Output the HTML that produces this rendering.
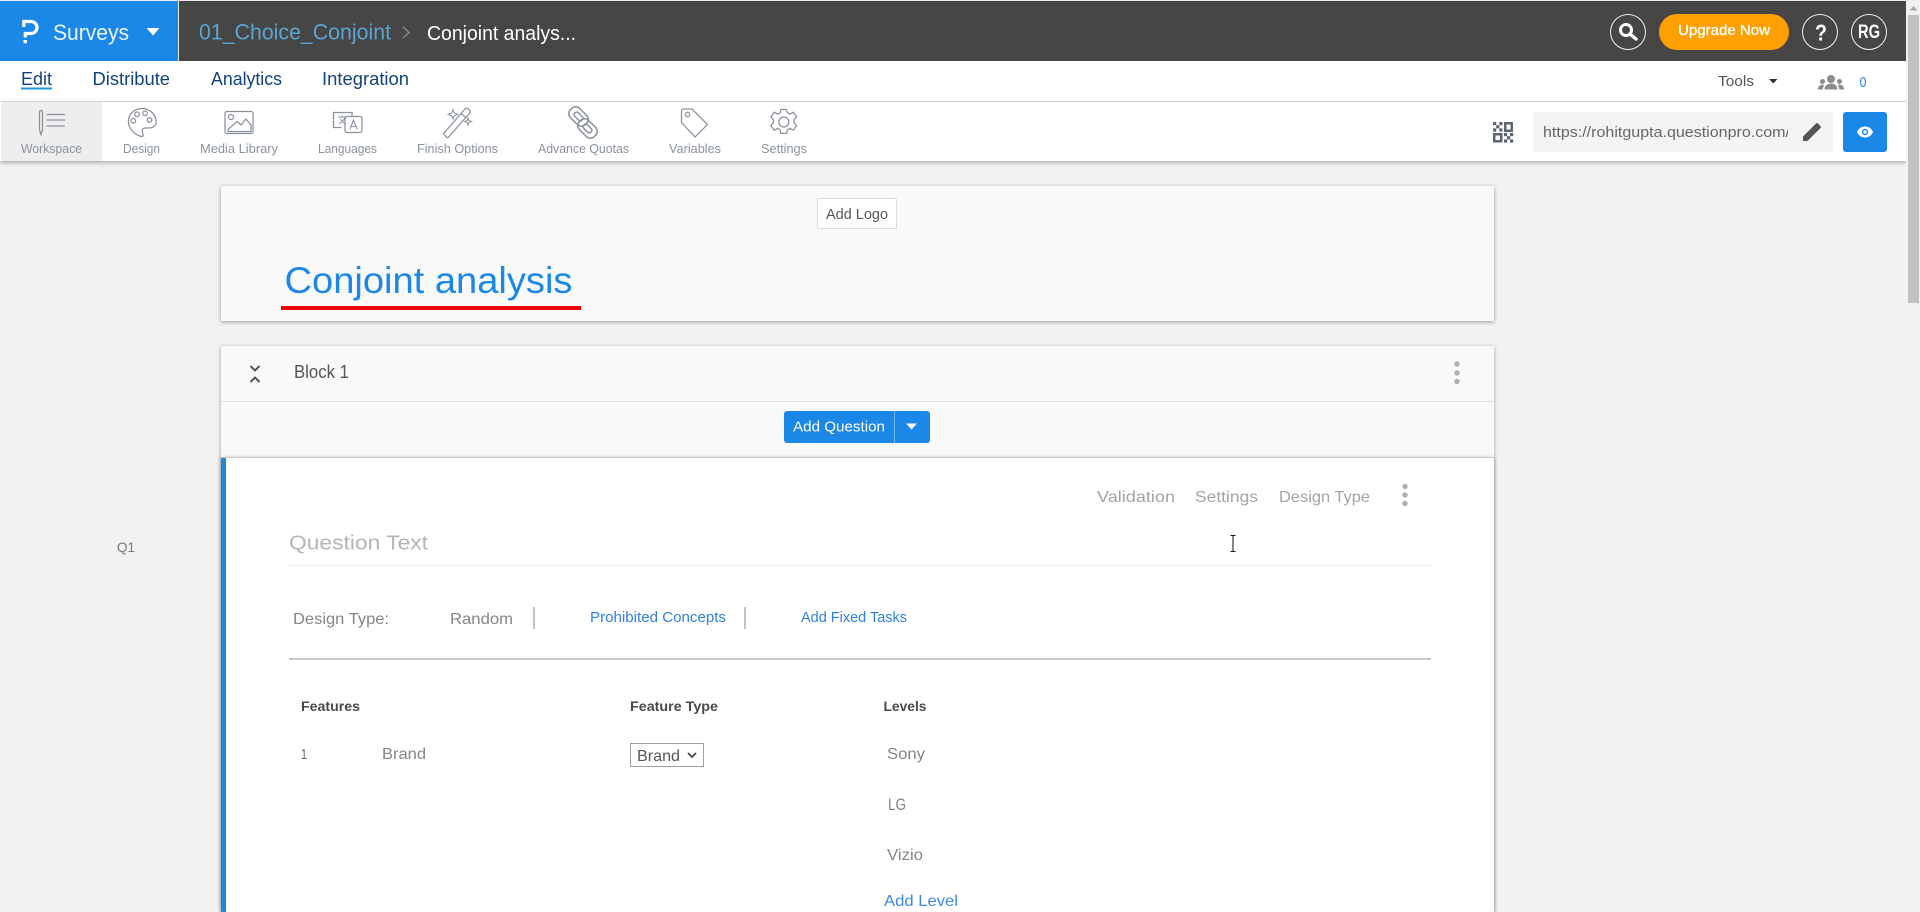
<!DOCTYPE html>
<html lang="en">
<head>
<meta charset="utf-8">
<title>Surveys - Conjoint analysis</title>
<style>
html,body{margin:0;padding:0;width:1920px;height:912px;overflow:hidden;background:#f2f2f2;font-family:"Liberation Sans",sans-serif}
#page{position:relative;width:1920px;height:912px;overflow:hidden;background:#f2f2f2}
.b{position:absolute;box-sizing:border-box}
svg{position:absolute;left:0;top:0;display:block}
text{font-family:"Liberation Sans",sans-serif}
.ic{fill:none;stroke:#8b919c;stroke-width:1.25}
.lab{font-size:13px;fill:#8b929d}
.nav{font-size:18px;fill:#14427f}
</style>
</head>
<body>
<div id="page">
<!-- top bar -->
<div class="b" style="left:0;top:0;width:1906px;height:61px;background:#464646"></div>
<div class="b" style="left:0;top:0;width:1920px;height:1px;background:#f0eaf0"></div>
<div class="b" style="left:0;top:1px;width:178px;height:60px;background:#1b87e6"></div>
<div class="b" style="left:178px;top:1px;width:1px;height:60px;background:#e8e8e8"></div>
<!-- nav -->
<div class="b" style="left:0;top:61px;width:1906px;height:41px;background:#fff;border-bottom:1px solid #dcdcdc"></div>
<!-- toolbar -->
<div class="b" style="left:0;top:102px;width:1906px;height:59px;background:#fff;box-shadow:0 2px 4px rgba(0,0,0,.28)"></div>
<div class="b" style="left:1px;top:102px;width:101px;height:59px;background:#eee"></div>
<div class="b" style="left:1533px;top:112px;width:300px;height:40px;background:#f4f4f4;border-radius:3px"></div>
<div class="b" style="left:1843px;top:112px;width:44px;height:40px;background:#1b87e6;border-radius:3px"></div>
<!-- scrollbar -->
<div class="b" style="left:1906px;top:1px;width:14px;height:911px;background:#f1f1f1"></div>
<div class="b" style="left:1908px;top:15px;width:11px;height:288px;background:#c1c1c1"></div>
<!-- header card -->
<div class="b" style="left:221px;top:186px;width:1273px;height:135px;background:#f9f9f9;box-shadow:0 1px 4px rgba(0,0,0,.38)"></div>
<div class="b" style="left:817px;top:198px;width:80px;height:31px;background:#fff;border:1px solid #dcdcdc;border-radius:2px"></div>
<div class="b" style="left:281px;top:306px;width:300px;height:4px;background:#e8000b"></div>
<!-- block card -->
<div class="b" style="left:221px;top:346px;width:1273px;height:566px;background:#f9f9f9;box-shadow:0 1px 4px rgba(0,0,0,.35)"></div>
<div class="b" style="left:221px;top:401px;width:1273px;height:1px;background:#dedede"></div>
<div class="b" style="left:784px;top:411px;width:146px;height:32px;background:#1b87e6;border-radius:3px"></div>
<div class="b" style="left:894px;top:411px;width:1px;height:32px;background:#6db4f0"></div>
<!-- question card -->
<div class="b" style="left:221px;top:457px;width:1273px;height:455px;background:#fff;border-top:1px solid #c9c9c9;box-shadow:0 1px 4px rgba(0,0,0,.3)"></div>
<div class="b" style="left:221px;top:458px;width:5px;height:454px;background:#1b87e6"></div>
<div class="b" style="left:289px;top:565px;width:1142px;height:1px;background:#ebebeb"></div>
<div class="b" style="left:289px;top:658px;width:1142px;height:2px;background:#c8c8c8"></div>
<div class="b" style="left:533px;top:607px;width:2px;height:22px;background:#c4c4c4"></div>
<div class="b" style="left:744px;top:607px;width:2px;height:22px;background:#c4c4c4"></div>
<div class="b" style="left:630px;top:743px;width:74px;height:24px;background:#fff;border:1px solid #a0a0a0"></div>

<svg width="1920" height="912" viewBox="0 0 1920 912" xmlns="http://www.w3.org/2000/svg">
<!-- logo -->
<path d="M23.800 27V21.500H31a6 6 0 0 1 0 12H25.300V37.500" fill="none" stroke="#fff" stroke-width="3.200"/>
<rect x="23.500" y="40" width="3.400" height="3.200" fill="#fff"/>
<text x="53" y="40" font-size="22" fill="#eaf4fd" textLength="76" lengthAdjust="spacingAndGlyphs">Surveys</text>
<path d="M146.500 28h13l-6.500 7.500z" fill="#fff"/>
<text x="199" y="39.500" font-size="22" fill="#5ba5d2" textLength="192" lengthAdjust="spacingAndGlyphs">01_Choice_Conjoint</text>
<path d="M403 27l6 5.500-6 5.500" fill="none" stroke="#8a8a8a" stroke-width="1.500"/>
<text x="427" y="40" font-size="20" fill="#fff" textLength="149" lengthAdjust="spacingAndGlyphs">Conjoint analys...</text>

<!-- top right -->
<circle cx="1628" cy="32" r="17.500" fill="none" stroke="#f2f2f2" stroke-width="1"/>
<circle cx="1626" cy="30" r="5.500" fill="none" stroke="#fff" stroke-width="3"/>
<path d="M1630 34l6 5" stroke="#fff" stroke-width="3.400" stroke-linecap="round"/>
<rect x="1659" y="14" width="130" height="36" rx="18" fill="#ffa000"/>
<text x="1678" y="35" font-size="15" fill="#fff" stroke="#fff" stroke-width=".35" textLength="92" lengthAdjust="spacingAndGlyphs">Upgrade Now</text>
<circle cx="1820" cy="32" r="17.500" fill="none" stroke="#f2f2f2" stroke-width="1"/>
<text x="1815" y="40.500" font-size="23" font-weight="bold" fill="#fff" textLength="12" lengthAdjust="spacingAndGlyphs">?</text>
<circle cx="1869" cy="32" r="17.500" fill="none" stroke="#f2f2f2" stroke-width="1"/>
<text x="1858" y="38" font-size="19" font-weight="bold" fill="#fff" textLength="22" lengthAdjust="spacingAndGlyphs">RG</text>

<!-- nav -->
<text class="nav" x="21" y="85" textLength="31" lengthAdjust="spacingAndGlyphs">Edit</text>
<rect x="21" y="87.500" width="31" height="2" fill="#1b9ad6"/>
<text class="nav" x="92.500" y="85" textLength="77.500" lengthAdjust="spacingAndGlyphs">Distribute</text>
<text class="nav" x="211" y="85" textLength="71" lengthAdjust="spacingAndGlyphs">Analytics</text>
<text class="nav" x="322" y="85" textLength="87" lengthAdjust="spacingAndGlyphs">Integration</text>
<text x="1718" y="86" font-size="15" fill="#555" textLength="36" lengthAdjust="spacingAndGlyphs">Tools</text>
<path d="M1769 79h8.500l-4.250 4.500z" fill="#333"/>
<g fill="#8c8c8c">
<circle cx="1831" cy="79" r="4"/><circle cx="1822.500" cy="81.500" r="2.500"/><circle cx="1839.500" cy="81.500" r="2.500"/>
<path d="M1824.500 89.500c0-8 13-8 13 0z"/><path d="M1818 89.500c0-4.500 3.500-5.500 6-4.500l-1.500 4.500z"/><path d="M1844 89.500c0-4.500-3.500-5.500-6-4.500l1.500 4.500z"/>
</g>
<text x="1859.500" y="87" font-size="15" fill="#2a7de1" textLength="7" lengthAdjust="spacingAndGlyphs">0</text>

<!-- toolbar icons -->
<g class="ic">
<path d="M39.500 112a1.500 1.500 0 0 1 3 0v18l-1.500 4.500-1.500-4.500z"/>
<path d="M46.500 114.500h18.500M46.500 120h18.500M46.500 126h18.500" stroke-width="1.300"/>
<!-- palette -->
<path d="M142 108.500c-7.800 0-13.600 5.800-13.600 13 0 6.500 5.800 13.500 13.200 15 1.800.3 1.800-1.500 1.200-3.300-1.100-2.800-.5-5.200 2.800-5.200h2.800c5 0 7.800-2.400 7.800-6 0-7-6-13.500-14.200-13.500z"/>
<circle cx="137" cy="114.300" r="2.300"/><circle cx="145" cy="113.300" r="2.300"/><circle cx="149.500" cy="120" r="2.300"/><circle cx="133.300" cy="120.800" r="2.300"/>
<!-- media -->
<rect x="225" y="111.500" width="28" height="22" rx="2"/>
<circle cx="231" cy="117" r="2.500"/>
<path d="M228 129.500l9-8 4 3.500 5-6 5 6v6.500h-23z"/>
<!-- languages -->
<path d="M352 116v-3.500h-18.500v15h8"/>
<rect x="345" y="116.500" width="17" height="16" rx="2"/>
<path d="M338 117h9M342.500 115.500v1.500M339 123.500c3-1 5-3.500 6-6.500M346 124c-2.500-1-4.500-3-5.500-5.500" stroke-width="1"/>
<path d="M350 129l3.500-9 3.500 9M351 126.500h5" stroke-width="1.100"/>
<!-- wand -->
<path d="M444.500 132.500l20.500-23.500c1-1 2-1 3-.3l1.500 1.300c1 1 1 2 .2 3l-21 24c-.8.8-1.400.8-2 .2l-2.500-2.500c-.6-.6-.6-1.200-.2-1.700z"/>
<path d="M461 113.500l5.500 4.500"/>
<path d="M453 109.500l1.300 3.500 3.500 1.300-3.500 1.300-1.300 3.500-1.300-3.500-3.500-1.300 3.500-1.300z" stroke-width="1"/>
<path d="M468 118l.9 2.600 2.600.9-2.600.9-.9 2.600-.9-2.600-2.600-.9 2.600-.9z" stroke-width="1"/>
<!-- chain -->
<g stroke-width="1.500">
<rect x="-10.500" y="-6.500" width="21" height="13" rx="5.500" transform="translate(578.500 116.500) rotate(45)"/>
<rect x="-5" y="-2.500" width="10" height="5" rx="2" transform="translate(578.500 116.500) rotate(45)"/>
<rect x="-10.500" y="-6.500" width="21" height="13" rx="5.500" transform="translate(587.500 128.500) rotate(45)"/>
<rect x="-5" y="-2.500" width="10" height="5" rx="2" transform="translate(587.500 128.500) rotate(45)"/>
</g>
<!-- tag -->
<path d="M681.500 111a2 2 0 0 1 2-2h8.500l15.500 15.500-12.500 12.500-13.500-14.500z"/>
<circle cx="687.500" cy="114.500" r="2.200"/>
<!-- gear -->
<path d="M781 109.500h5.500l1 3.500 2.500 1 3.200-1.800 3.400 4.500-2.500 3v3l2.500 3-3.400 4.500-3.200-1.800-2.500 1-1 4h-5.500l-1-4-2.500-1-3.200 1.800-3.400-4.500 2.500-3v-3l-2.500-3 3.400-4.500 3.200 1.800 2.500-1z"/>
<circle cx="783.800" cy="122" r="5"/>
</g>
<text class="lab" x="21" y="153" textLength="61" lengthAdjust="spacingAndGlyphs">Workspace</text>
<text class="lab" x="123" y="153" textLength="37" lengthAdjust="spacingAndGlyphs">Design</text>
<text class="lab" x="200" y="153" textLength="78" lengthAdjust="spacingAndGlyphs">Media Library</text>
<text class="lab" x="318" y="153" textLength="59" lengthAdjust="spacingAndGlyphs">Languages</text>
<text class="lab" x="417" y="153" textLength="81" lengthAdjust="spacingAndGlyphs">Finish Options</text>
<text class="lab" x="538" y="153" textLength="91" lengthAdjust="spacingAndGlyphs">Advance Quotas</text>
<text class="lab" x="669" y="153" textLength="52" lengthAdjust="spacingAndGlyphs">Variables</text>
<text class="lab" x="761" y="153" textLength="46" lengthAdjust="spacingAndGlyphs">Settings</text>

<!-- QR -->
<g fill="#5b6470">
<path fill-rule="evenodd" d="M1504 122h9v10h-9zM1506.500 124.500v5h4v-5zM1493 133h9.500v9.500h-9.500zM1495.500 135.500v4.500h4.500v-4.500z"/>
<rect x="1493" y="122" width="3.200" height="3.200"/><rect x="1499.300" y="122" width="3.200" height="3.200"/><rect x="1496.200" y="125.200" width="3.200" height="3.200"/><rect x="1493" y="128.400" width="3.200" height="3.200"/><rect x="1499.300" y="128.400" width="3.200" height="3.200"/>
<rect x="1504" y="133" width="3.200" height="3.200"/><rect x="1510" y="133" width="3.200" height="3.200"/><rect x="1507" y="136.200" width="3.200" height="3.200"/><rect x="1504" y="139.400" width="3.200" height="3.200"/><rect x="1510" y="139.400" width="3.200" height="3.200"/>
</g>
<!-- URL -->
<defs><clipPath id="u"><rect x="1543" y="118" width="245" height="28"/></clipPath></defs>
<g clip-path="url(#u)"><text x="1543" y="137" font-size="15" fill="#666" textLength="247" lengthAdjust="spacingAndGlyphs">https://rohitgupta.questionpro.com/</text></g>
<path d="M1803 136.500v4.500h4.500l11.500-11.500-4.500-4.500zM1820.500 128c.6-.6.6-1.500 0-2l-2.500-2.500c-.6-.6-1.500-.6-2 0l-1.500 1.500 4.500 4.500z" fill="#555"/>
<!-- eye -->
<path d="M1865 126.500c-3.800 0-6.700 2.300-8 5.500 1.300 3.200 4.200 5.500 8 5.500s6.700-2.300 8-5.500c-1.300-3.200-4.200-5.500-8-5.500z" fill="#fff"/>
<circle cx="1865" cy="132" r="3.200" fill="#1b87e6"/><circle cx="1865" cy="132" r="1.700" fill="#fff"/>

<!-- header card -->
<text x="826" y="219" font-size="15" fill="#555" textLength="62" lengthAdjust="spacingAndGlyphs">Add Logo</text>
<text x="284.500" y="293" font-size="37" fill="#1b87e6" textLength="288" lengthAdjust="spacingAndGlyphs">Conjoint analysis</text>

<!-- block -->
<path d="M250.500 366l4.500 4.500 4.500-4.500M250.500 382l4.500-4.500 4.500 4.500" fill="none" stroke="#555" stroke-width="2"/>
<text x="294" y="378" font-size="18" fill="#555" textLength="55" lengthAdjust="spacingAndGlyphs">Block 1</text>
<g fill="#b0b0b0"><circle cx="1457" cy="364" r="2.700"/><circle cx="1457" cy="373" r="2.700"/><circle cx="1457" cy="381.500" r="2.700"/></g>
<text x="793" y="431.500" font-size="15" fill="#fff" textLength="92" lengthAdjust="spacingAndGlyphs">Add Question</text>
<path d="M906 423.500h11l-5.500 6z" fill="#fff"/>

<!-- question -->
<text x="117" y="552" font-size="14" fill="#777" textLength="18" lengthAdjust="spacingAndGlyphs">Q1</text>
<text x="1097" y="502" font-size="16" fill="#a3a3a3" textLength="78" lengthAdjust="spacingAndGlyphs">Validation</text>
<text x="1195" y="502" font-size="16" fill="#a3a3a3" textLength="63" lengthAdjust="spacingAndGlyphs">Settings</text>
<text x="1279" y="502" font-size="16" fill="#a3a3a3" textLength="91" lengthAdjust="spacingAndGlyphs">Design Type</text>
<g fill="#b0b0b0"><circle cx="1405" cy="486.500" r="2.700"/><circle cx="1405" cy="495" r="2.700"/><circle cx="1405" cy="503.500" r="2.700"/></g>
<path d="M1230.500 535.500h2l.5.500.5-.5h2M1233 536v15M1230.500 551.500h2l.5-.5.5.5h2" fill="none" stroke="#111" stroke-width="1"/>
<text x="289" y="549.500" font-size="20" fill="#b5b5b5" textLength="139" lengthAdjust="spacingAndGlyphs">Question Text</text>

<text x="293" y="624" font-size="16" fill="#858585" textLength="96" lengthAdjust="spacingAndGlyphs">Design Type:</text>
<text x="450" y="624" font-size="16" fill="#858585" textLength="63" lengthAdjust="spacingAndGlyphs">Random</text>
<text x="590" y="622" font-size="15" fill="#2f80e4" textLength="136" lengthAdjust="spacingAndGlyphs">Prohibited Concepts</text>
<text x="801" y="622" font-size="15" fill="#2f80e4" textLength="106" lengthAdjust="spacingAndGlyphs">Add Fixed Tasks</text>

<text x="301" y="711" font-size="14" font-weight="bold" fill="#4a4a4a" textLength="59" lengthAdjust="spacingAndGlyphs">Features</text>
<text x="630" y="711" font-size="14" font-weight="bold" fill="#4a4a4a" textLength="88" lengthAdjust="spacingAndGlyphs">Feature Type</text>
<text x="883.500" y="711" font-size="14" font-weight="bold" fill="#4a4a4a" textLength="43" lengthAdjust="spacingAndGlyphs">Levels</text>

<text x="301" y="759" font-size="15" fill="#666" textLength="6" lengthAdjust="spacingAndGlyphs">1</text>
<text x="382" y="759" font-size="16" fill="#858585" textLength="44" lengthAdjust="spacingAndGlyphs">Brand</text>
<text x="637" y="761" font-size="16" fill="#555" textLength="43" lengthAdjust="spacingAndGlyphs">Brand</text>
<path d="M688 753l4 4 4-4" fill="none" stroke="#444" stroke-width="1.800"/>
<text x="887" y="759" font-size="16" fill="#858585" textLength="38" lengthAdjust="spacingAndGlyphs">Sony</text>
<text x="888" y="810" font-size="17" fill="#858585" textLength="18" lengthAdjust="spacingAndGlyphs">LG</text>
<text x="887" y="860" font-size="16" fill="#858585" textLength="36" lengthAdjust="spacingAndGlyphs">Vizio</text>
<text x="884" y="906" font-size="16" fill="#3d87e6" textLength="74" lengthAdjust="spacingAndGlyphs">Add Level</text>

<!-- scrollbar arrow -->
<path d="M1913.500 6l-4 4.500h8z" fill="#a8a8a8"/>
</svg>
</div>
</body>
</html>
